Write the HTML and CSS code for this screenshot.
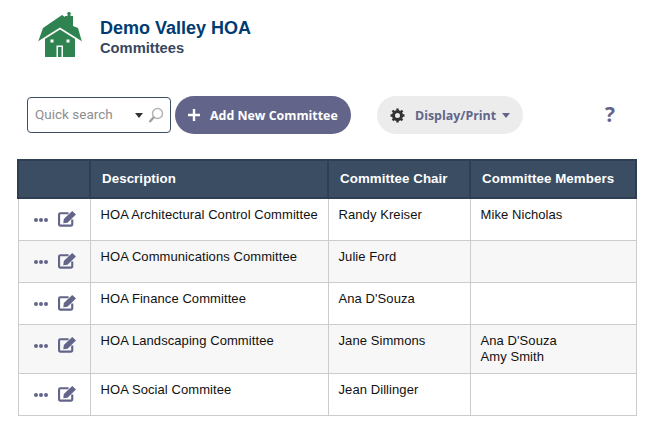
FILE: index.html
```html
<!DOCTYPE html>
<html lang="en">
<head>
    <meta charset="UTF-8">
    <title>Demo Valley HOA - Committees</title>
    <link rel="stylesheet" href="styles.css">
</head>
<body>
    <svg width="0" height="0" class="defs">
        <symbol id="edit" viewBox="0 0 18 16">
            <path d="M13.500 9v4.500a1.200 1.200 0 0 1-1.200 1.200H2.200a1.200 1.200 0 0 1-1.200-1.200V4.200A1.200 1.200 0 0 1 2.200 3H10" fill="none" stroke="currentColor" stroke-width="2"/>
            <path d="M5.500 8.500 13.500 .8l3.500 3.400-8 7.800-4 .4z" fill="currentColor"/>
        </symbol>
    </svg>

    <header class="brand">
        <svg class="logo" width="46" height="46" viewBox="37 12 46 46">
            <path d="M38 42 43 28 62 15 65 17V16H67.500V13.500H66.500L69 11.500 71.500 13.500H70.500V16H73V26L78 28 82 42 75 38V57H45V38Z" fill="#2f8350"/>
            <path d="M38.500 42 60 28.500 81.500 42" fill="none" stroke="#fff" stroke-width="1.500"/>
            <rect x="50.500" y="39.500" width="3" height="3" fill="#fff"/>
            <rect x="66.500" y="39.500" width="3" height="3" fill="#fff"/>
            <path d="M56.500 57V45.500H63V57H61.500V47H58V57Z" fill="#fff"/>
        </svg>
        <div class="brand-text">
            <h1>Demo Valley HOA</h1>
            <h2>Committees</h2>
        </div>
    </header>

    <div class="toolbar">
        <div class="search">
            <span class="search-label">Quick search</span>
            <span class="caret-dark"></span>
            <svg class="lens" width="16" height="16" viewBox="0 0 16 16">
                <circle cx="9.500" cy="6.500" r="5" fill="#fff" stroke="#b4b4b4" stroke-width="1.500"/>
                <path d="M6 10 1.500 15" stroke="#a0a0a0" stroke-width="2.400"/>
            </svg>
        </div>
        <button class="btn-add" type="button">
            <svg width="12" height="12" viewBox="0 0 12 12"><path d="M6 0v12M0 6h12" stroke="#fff" stroke-width="2.400"/></svg>
            Add New Committee
        </button>
        <button class="btn-display" type="button">
            <svg width="15" height="15" viewBox="0 0 15 15">
                <circle cx="7.500" cy="7.500" r="4" fill="none" stroke="#333" stroke-width="3"/>
                <path d="M7.500 .5v14M.5 7.500h14M2.500 2.500l10 10M12.500 2.500l-10 10" stroke="#333" stroke-width="2.400" stroke-dasharray="2.600 8.800"/>
            </svg>
            Display/Print
            <span class="caret"></span>
        </button>
        <span class="help">?</span>
    </div>

    <table class="grid">
        <thead>
            <tr>
                <th class="col-actions"></th>
                <th class="col-desc">Description</th>
                <th class="col-chair">Committee Chair</th>
                <th>Committee Members</th>
            </tr>
        </thead>
        <tbody>
            <tr>
                <td class="actions"><span class="dots"><i></i><i></i><i></i></span><svg class="edit" width="19" height="17"><use href="#edit"/></svg></td>
                <td>HOA Architectural Control Committee</td>
                <td>Randy Kreiser</td>
                <td>Mike Nicholas</td>
            </tr>
            <tr>
                <td class="actions"><span class="dots"><i></i><i></i><i></i></span><svg class="edit" width="19" height="17"><use href="#edit"/></svg></td>
                <td>HOA Communications Committee</td>
                <td>Julie Ford</td>
                <td></td>
            </tr>
            <tr>
                <td class="actions"><span class="dots"><i></i><i></i><i></i></span><svg class="edit" width="19" height="17"><use href="#edit"/></svg></td>
                <td>HOA Finance Committee</td>
                <td>Ana D'Souza</td>
                <td></td>
            </tr>
            <tr>
                <td class="actions"><span class="dots"><i></i><i></i><i></i></span><svg class="edit" width="19" height="17"><use href="#edit"/></svg></td>
                <td>HOA Landscaping Committee</td>
                <td>Jane Simmons</td>
                <td>Ana D'Souza<br>Amy Smith</td>
            </tr>
            <tr>
                <td class="actions"><span class="dots"><i></i><i></i><i></i></span><svg class="edit" width="19" height="17"><use href="#edit"/></svg></td>
                <td>HOA Social Commitee</td>
                <td>Jean Dillinger</td>
                <td></td>
            </tr>
        </tbody>
    </table>
</body>
</html>
```

FILE: styles.css
```css
* {
    box-sizing: border-box;
}

body {
    margin: 0;
    padding: 12px 16px 0 18px;
    background: #fff;
    font-family: "Liberation Sans", Arial, sans-serif;
    overflow: hidden;
}

.defs {
    display: block;
    height: 0;
}

/* Logo and page title */
.brand {
    display: flex;
    align-items: center;
    gap: 17px;
    padding-left: 19px;
    height: 46px;
}

.brand-text {
    padding-top: 5px;
}

.brand-text h1 {
    margin: 0;
    font-size: 18px;
    line-height: 21px;
    color: #003c71;
}

.brand-text h2 {
    margin: 0;
    font-size: 14.7px;
    line-height: 18px;
    color: #37475f;
}

/* Search and buttons */
.toolbar {
    display: flex;
    align-items: center;
    margin-top: 38px;
    padding-left: 9px;
    height: 38px;
}

.search {
    display: flex;
    align-items: center;
    width: 144px;
    height: 36px;
    padding: 0 6px 0 7px;
    border: 1px solid #3b4e62;
    border-radius: 4px;
}

.search-label {
    flex: 1;
    margin-top: -2px;
    font-family: Roboto, sans-serif;
    font-size: 13.5px;
    color: #8e8e8e;
}

.caret-dark {
    width: 0;
    height: 0;
    margin-right: 5px;
    border: 4px solid transparent;
    border-top: 5px solid #333;
    border-bottom: 0;
}

.btn-add,
.btn-display {
    display: flex;
    align-items: center;
    height: 38px;
    border: 0;
    border-radius: 19px;
    font-family: "Open Sans", sans-serif;
    font-size: 12.4px;
    font-weight: 700;
}

.btn-add {
    width: 176px;
    margin-left: 4px;
    padding-left: 13px;
    gap: 10px;
    background: #626589;
    color: #fff;
}

.btn-display {
    width: 146px;
    margin-left: 26px;
    padding-left: 13px;
    gap: 10px;
    background: #ececec;
    color: #626589;
}

.caret {
    width: 0;
    height: 0;
    margin-left: -4px;
    border: 4px solid transparent;
    border-top: 5px solid #626589;
    border-bottom: 0;
}

.help {
    margin-left: 82px;
    margin-top: -2px;
    font-family: "Open Sans", sans-serif;
    font-size: 21px;
    font-weight: 700;
    color: #626589;
}

/* Committee table */
.grid {
    width: 620px;
    margin: 25px 0 0 -1px;
    border-collapse: collapse;
    table-layout: fixed;
    font-size: 13px;
    letter-spacing: .08px;
    color: #111;
}

.grid th {
    height: 38px;
    padding: 0 4px 2px 11px;
    background: #3a4d63;
    border: 2px solid #2e3f53;
    color: #fff;
    font-size: 13.3px;
    text-align: left;
}

.col-actions {
    width: 72px;
}

.col-desc {
    width: 238px;
}

.col-chair {
    width: 142px;
}

.grid td {
    height: 42px;
    padding: 8px 4px 8px 10px;
    border: 1px solid #ccc;
    vertical-align: top;
    line-height: 16px;
}

.grid tbody tr:nth-child(even) td {
    background: #f7f7f7;
}

.grid .actions {
    padding: 11px 0 0 15px;
}

.dots {
    display: inline-flex;
    gap: 1px;
    margin-right: 10px;
    vertical-align: 5px;
}

.dots i {
    width: 4px;
    height: 4px;
    border-radius: 50%;
    background: #626589;
}

.edit {
    color: #626589;
}
```
